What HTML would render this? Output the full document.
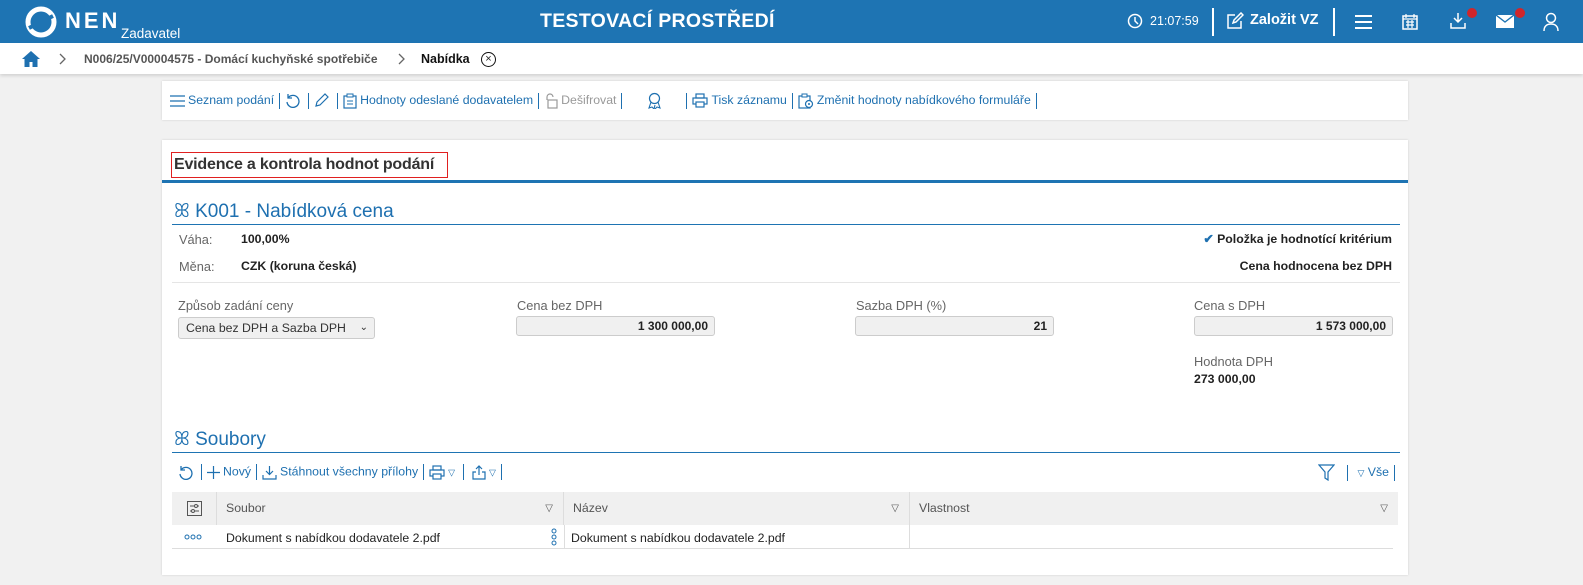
<!DOCTYPE html>
<html><head><meta charset="utf-8"><style>
*{box-sizing:border-box;margin:0;padding:0}
body{width:1583px;height:585px;background:#f1f1f1;font-family:"Liberation Sans",sans-serif;font-size:12.3px;color:#222;position:relative;overflow:hidden}
.a{position:absolute;white-space:nowrap}
.blue{color:#1e70b0}
.hdr{position:absolute;left:0;top:0;width:1583px;height:43px;background:#1e74b3;color:#fff}
.bc{position:absolute;left:0;top:43px;width:1583px;height:31px;background:#fff;box-shadow:0 2px 3px rgba(0,0,0,.12)}
.card{position:absolute;background:#fff;box-shadow:0 0 2px rgba(0,0,0,.15)}
.sep{display:inline-block;width:1px;height:16px;background:#1e70b0;vertical-align:middle;margin:0 5px}
.ic{display:inline-block;vertical-align:middle;margin-right:3px}
.lbl{color:#666;font-size:12.8px}
.inp{position:absolute;height:20px;background:#f0f0f0;border:1px solid #ccc;border-radius:3px;text-align:right;padding-right:6px;font-weight:bold;font-size:12px;line-height:18px}
.th{position:absolute;top:492px;height:33px;background:#f0f0f0;border-right:1px solid #ddd;color:#555;line-height:33px;padding-left:9px}
</style></head><body>
<div class="hdr">
 <svg class="a" style="left:25px;top:6px" width="32" height="32" viewBox="0 0 32 32"><circle cx="16" cy="16" r="13" fill="none" stroke="#fff" stroke-width="5"/><path d="M4 22 L28 10" stroke="#1e74b3" stroke-width="4"/></svg>
 <div class="a" style="left:65px;top:8px;font-size:22px;font-weight:bold;letter-spacing:3px">NEN</div>
 <div class="a" style="left:121px;top:26px;font-size:13.5px">Zadavatel</div>
 <div class="a" style="left:540px;top:10px;font-size:19.5px;font-weight:bold;letter-spacing:.3px">TESTOVACÍ PROSTŘEDÍ</div>
 <svg class="a" style="left:1127px;top:13px" width="16" height="16"><circle cx="8" cy="8" r="6.5" fill="none" stroke="#fff" stroke-width="1.5"/><path d="M8 4v4l3 3" stroke="#fff" stroke-width="1.5" fill="none"/></svg>
 <div class="a" style="left:1150px;top:14px;font-size:12.5px">21:07:59</div>
 <div class="a" style="left:1212px;top:8px;width:2px;height:28px;background:#fff"></div>
 <svg class="a" style="left:1226px;top:12px" width="18" height="18"><path d="M9 3H2v13h13V9M7 11l1-3 7-7 2 2-7 7z" stroke="#fff" stroke-width="1.5" fill="none"/></svg>
 <div class="a" style="left:1250px;top:12px;font-size:14.5px;font-weight:bold">Založit VZ</div>
 <div class="a" style="left:1333px;top:8px;width:2px;height:28px;background:#fff"></div>
 <div class="a" style="left:1355px;top:15px;width:17px;height:2px;background:#fff;box-shadow:0 6px 0 #fff,0 12px 0 #fff"></div>
 <svg class="a" style="left:1402px;top:13px" width="16" height="17"><rect x="1" y="3" width="14" height="13" fill="none" stroke="#fff" stroke-width="1.5"/><path d="M1 6h14M4 1v4M12 1v4M4 9h8M4 12h8M6 7v8M10 7v8" stroke="#fff" stroke-width="1.2"/></svg>
 <svg class="a" style="left:1449px;top:12px" width="18" height="18"><path d="M9 1v9M5 6l4 4 4-4M2 11v5h14v-5" stroke="#fff" stroke-width="1.5" fill="none"/></svg>
 <div class="a" style="left:1467px;top:8px;width:10px;height:10px;border-radius:50%;background:#d0262b"></div>
 <svg class="a" style="left:1496px;top:15px" width="18" height="13"><rect width="18" height="13" fill="#fff"/><path d="M0 0l9 7 9-7" stroke="#1e74b3" stroke-width="1.3" fill="none"/></svg>
 <div class="a" style="left:1515px;top:8px;width:10px;height:10px;border-radius:50%;background:#d0262b"></div>
 <svg class="a" style="left:1543px;top:12px" width="16" height="19"><circle cx="8" cy="6" r="4.5" fill="none" stroke="#fff" stroke-width="1.5"/><path d="M1 19c0-5 3-7 7-7s7 2 7 7" stroke="#fff" stroke-width="1.5" fill="none"/></svg>
</div>
<div class="bc">
 <svg class="a" style="left:22px;top:8px" width="18" height="16"><path d="M9 0L0 8h2.5v8h5v-5h3v5h5V8H18z" fill="#1e70b0"/></svg>
 <svg class="a" style="left:59px;top:10px" width="8" height="12"><path d="M1 1l5 5-5 5" stroke="#666" stroke-width="1.3" fill="none"/></svg>
 <div class="a" style="left:84px;top:9px;color:#555;font-weight:bold;font-size:12px">N006/25/V00004575 - Domácí kuchyňské spotřebiče</div>
 <svg class="a" style="left:398px;top:10px" width="8" height="12"><path d="M1 1l5 5-5 5" stroke="#666" stroke-width="1.3" fill="none"/></svg>
 <div class="a" style="left:421px;top:9px;font-weight:bold;font-size:12.5px;color:#111">Nabídka</div>
 <div class="a" style="left:481px;top:9px;width:15px;height:15px;border:1.3px solid #111;border-radius:50%;text-align:center;line-height:12px;font-size:11px">×</div>
</div>
<div class="card" style="left:162px;top:81px;width:1246px;height:39px">
 <div class="a blue" style="left:8px;top:11px">
  <svg class="ic" width="15" height="12"><path d="M0 1h15M0 6h15M0 11h15" stroke="#1e70b0" stroke-width="1.3"/></svg>Seznam podání<span class="sep"></span><svg class="ic" width="15" height="15"><path d="M3 5A6 6 0 1 1 2 9M3 1v4h4" stroke="#1e70b0" stroke-width="1.3" fill="none"/></svg><span class="sep"></span><svg class="ic" width="15" height="15"><path d="M2 13l1-4 8-8 3 3-8 8z" stroke="#1e70b0" stroke-width="1.2" fill="none"/></svg><span class="sep"></span><svg class="ic" width="14" height="16"><rect x="1" y="3" width="12" height="12" fill="none" stroke="#1e70b0" stroke-width="1.2"/><rect x="4" y="1" width="6" height="3" fill="#fff" stroke="#1e70b0"/><path d="M4 8h6M4 11h6" stroke="#1e70b0"/></svg>Hodnoty odeslané dodavatelem<span class="sep"></span><span style="color:#999"><svg class="ic" width="14" height="16"><path d="M3 7V4a3 3 0 0 1 6 0" stroke="#999" fill="none" stroke-width="1.2"/><rect x="4" y="7" width="9" height="8" fill="none" stroke="#999" stroke-width="1.2"/></svg>Dešifrovat</span><span class="sep"></span><span style="display:inline-block;width:54px;text-align:center"><svg width="15" height="17" style="vertical-align:middle"><circle cx="7.5" cy="6.5" r="5" fill="none" stroke="#1e70b0" stroke-width="1.2"/><path d="M4 10l-2 6 3-1 2 2 1-4M11 10l2 6-3-1-2 2" stroke="#1e70b0" fill="none" stroke-width="1.1"/></svg></span><span class="sep"></span><svg class="ic" width="16" height="15"><rect x="4" y="1" width="8" height="4" fill="none" stroke="#1e70b0" stroke-width="1.2"/><rect x="1" y="5" width="14" height="6" fill="none" stroke="#1e70b0" stroke-width="1.2"/><rect x="4" y="9" width="8" height="5" fill="#fff" stroke="#1e70b0" stroke-width="1.2"/></svg>Tisk záznamu<span class="sep"></span><svg class="ic" width="16" height="16"><rect x="1" y="3" width="11" height="12" fill="none" stroke="#1e70b0" stroke-width="1.2"/><rect x="4" y="1" width="5" height="3" fill="#fff" stroke="#1e70b0"/><circle cx="11" cy="11" r="3.5" fill="#fff" stroke="#1e70b0" stroke-width="1.2"/><circle cx="11" cy="11" r="1" fill="#1e70b0"/></svg>Změnit hodnoty nabídkového formuláře<span class="sep"></span>
 </div>
</div>
<div class="card" style="left:162px;top:140px;width:1246px;height:435px">
 <div class="a" style="left:9px;top:12px;width:277px;height:26px;border:1px solid #e02020"></div>
 <div class="a" style="left:12px;top:16px;font-size:16px;font-weight:bold;color:#333;letter-spacing:-.2px">Evidence a kontrola hodnot podání</div>
 <div class="a" style="left:0;top:40px;width:1246px;height:3px;background:#1e74b3"></div>
 <div class="a blue" style="left:12px;top:61px;font-size:19px">ꕤ K001 - Nabídková cena</div>
 <div class="a" style="left:10px;top:84px;width:1228px;height:1px;background:#1e74b3"></div>
 <div class="a lbl" style="left:17px;top:92px">Váha:</div>
 <div class="a" style="left:79px;top:92px;font-weight:bold">100,00%</div>
 <div class="a lbl" style="left:17px;top:119px">Měna:</div>
 <div class="a" style="left:79px;top:119px;font-weight:bold">CZK (koruna česká)</div>
 <div class="a" style="right:16px;top:92px;font-weight:bold"><span class="blue">✔</span> Položka je hodnotící kritérium</div>
 <div class="a" style="right:16px;top:119px;font-weight:bold">Cena hodnocena bez DPH</div>
 <div class="a" style="left:10px;top:142px;width:1228px;height:1px;background:#e5e5e5"></div>
 <div class="a lbl" style="left:16px;top:158px">Způsob zadání ceny</div>
 <div class="a" style="left:16px;top:177px;width:197px;height:22px;background:#f0f0f0;border:1px solid #ccc;border-radius:3px;padding-left:7px;line-height:20px;color:#333">Cena bez DPH a Sazba DPH<span style="position:absolute;right:6px;font-size:10px">⌄</span></div>
 <div class="a lbl" style="left:355px;top:158px">Cena bez DPH</div>
 <div class="inp" style="left:354px;top:176px;width:199px">1 300 000,00</div>
 <div class="a lbl" style="left:694px;top:158px">Sazba DPH (%)</div>
 <div class="inp" style="left:693px;top:176px;width:199px">21</div>
 <div class="a lbl" style="left:1032px;top:158px">Cena s DPH</div>
 <div class="inp" style="left:1032px;top:176px;width:199px">1 573 000,00</div>
 <div class="a lbl" style="left:1032px;top:214px">Hodnota DPH</div>
 <div class="a" style="left:1032px;top:232px;font-weight:bold">273 000,00</div>
 <div class="a blue" style="left:12px;top:289px;font-size:19px">ꕤ Soubory</div>
 <div class="a" style="left:10px;top:312px;width:1228px;height:1px;background:#1e74b3"></div>
 <div class="a blue" style="left:16px;top:324px"><svg class="ic" width="15" height="15"><path d="M3 5A6 6 0 1 1 2 9M3 1v4h4" stroke="#1e70b0" stroke-width="1.3" fill="none"/></svg><span class="sep"></span><svg class="ic" width="13" height="13"><path d="M6.5 0v13M0 6.5h13" stroke="#1e70b0" stroke-width="1.2"/></svg>Nový<span class="sep"></span><svg class="ic" width="15" height="15"><path d="M7.5 1v8M4 6l3.5 3.5L11 6M1 10v4h13v-4" stroke="#1e70b0" stroke-width="1.2" fill="none"/></svg>Stáhnout všechny přílohy<span class="sep"></span><svg class="ic" width="16" height="15"><rect x="4" y="1" width="8" height="4" fill="none" stroke="#1e70b0" stroke-width="1.2"/><rect x="1" y="5" width="14" height="6" fill="none" stroke="#1e70b0" stroke-width="1.2"/><rect x="4" y="9" width="8" height="5" fill="#fff" stroke="#1e70b0" stroke-width="1.2"/></svg><span style="font-size:9px">▽</span><span class="sep" style="margin:0 8px"></span><svg class="ic" width="14" height="15"><path d="M7 10V1M4 4l3-3 3 3M4 7H1v7h12V7h-3" stroke="#1e70b0" stroke-width="1.2" fill="none"/></svg><span style="font-size:9px">▽</span><span class="sep"></span></div>
 <div class="a blue" style="right:8px;top:324px"><svg class="ic" width="17" height="17"><path d="M1 1h15l-6 7v8l-3-2V8z" stroke="#1e70b0" stroke-width="1.2" fill="none"/></svg><span class="sep" style="margin:0 9px"></span><span style="font-size:9px">▽</span> Vše<span class="sep"></span></div>
</div>
<div class="th" style="left:172px;width:45px;padding:0;text-align:center"><svg width="15" height="15" style="vertical-align:middle"><rect x=".5" y=".5" width="14" height="14" fill="none" stroke="#555"/><path d="M3 5h9M3 10h9" stroke="#555"/><circle cx="9" cy="5" r="1.5" fill="#f0f0f0" stroke="#555"/><circle cx="6" cy="10" r="1.5" fill="#f0f0f0" stroke="#555"/></svg></div>
<div class="th" style="left:217px;width:347px">Soubor<span style="position:absolute;right:10px;font-size:10px">▽</span></div>
<div class="th" style="left:564px;width:346px">Název<span style="position:absolute;right:10px;font-size:10px">▽</span></div>
<div class="th" style="left:910px;width:488px;border-right:none">Vlastnost<span style="position:absolute;right:10px;font-size:10px">▽</span></div>
<div class="a" style="left:172px;top:525px;width:1221px;height:24px;border-bottom:1px solid #ddd"></div>
<svg class="a" style="left:184px;top:534px" width="18" height="6"><circle cx="3" cy="3" r="2" fill="none" stroke="#1e70b0"/><circle cx="9" cy="3" r="2" fill="none" stroke="#1e70b0"/><circle cx="15" cy="3" r="2" fill="none" stroke="#1e70b0"/></svg>
<div class="a" style="left:226px;top:531px">Dokument s nabídkou dodavatele 2.pdf</div>
<svg class="a" style="left:551px;top:528px" width="6" height="18"><circle cx="3" cy="3" r="2" fill="none" stroke="#1e70b0"/><circle cx="3" cy="9" r="2" fill="none" stroke="#1e70b0"/><circle cx="3" cy="15" r="2" fill="none" stroke="#1e70b0"/></svg>
<div class="a" style="left:564px;top:525px;width:1px;height:24px;background:#ddd"></div>
<div class="a" style="left:571px;top:531px">Dokument s nabídkou dodavatele 2.pdf</div>
<div class="a" style="left:909px;top:525px;width:1px;height:24px;background:#ddd"></div>
</body></html>
